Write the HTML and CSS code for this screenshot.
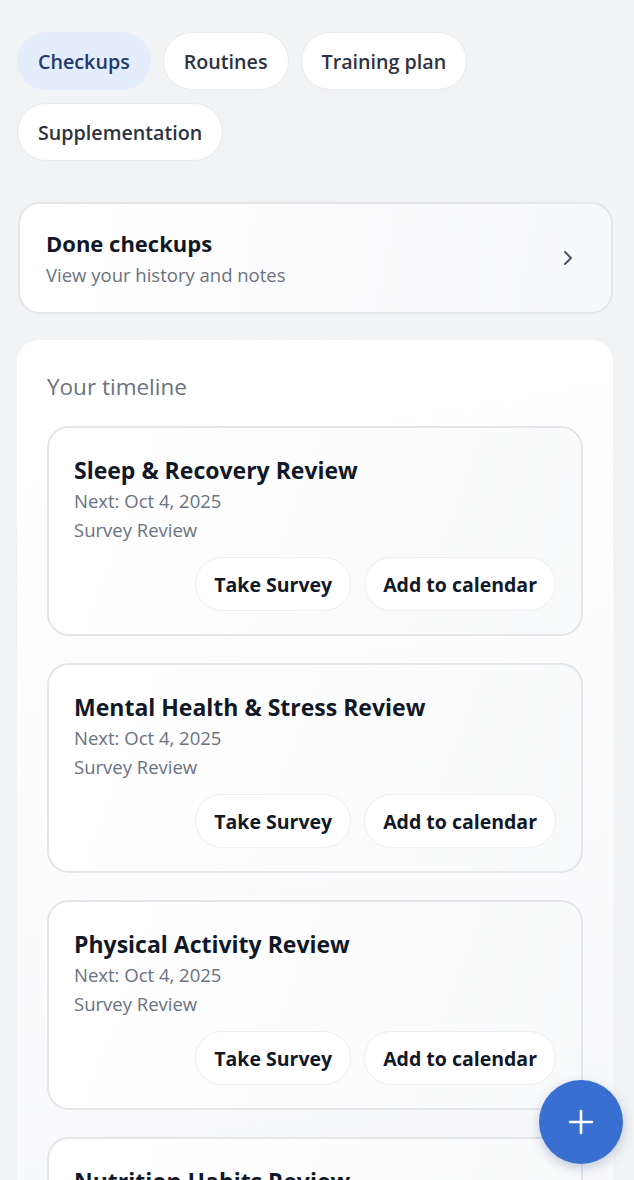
FILE: index.html
```html
<!DOCTYPE html>
<html lang="en">
<head>
    <meta charset="utf-8" />
    <link rel="stylesheet" href="styles.css">
</head>
<body>
    <div class="page">
        <div class="tabs">
            <a class="tab active" href="#">Checkups</a>
            <a class="tab" href="#">Routines</a>
            <a class="tab" href="#">Training plan</a>
            <a class="tab" href="#">Supplementation</a>
        </div>

        <a class="done" href="#">
            <div class="done-text">
                <div class="done-title">Done checkups</div>
                <div class="done-sub">View your history and notes</div>
            </div>
            <svg class="chevron" width="14" height="20" viewBox="0 0 14 20">
                <path d="M4 4l6 6-6 6" fill="none" stroke="#4b5563" stroke-width="2" stroke-linecap="round" stroke-linejoin="round"/>
            </svg>
        </a>

        <div class="timeline">
            <div class="timeline-head">Your timeline</div>

            <div class="item">
                <div class="item-title">Sleep &amp; Recovery Review</div>
                <div class="item-meta">Next: Oct 4, 2025</div>
                <div class="item-meta">Survey Review</div>
                <div class="actions">
                    <a class="btn" href="#">Take Survey</a>
                    <a class="btn" href="#">Add to calendar</a>
                </div>
            </div>

            <div class="item">
                <div class="item-title">Mental Health &amp; Stress Review</div>
                <div class="item-meta">Next: Oct 4, 2025</div>
                <div class="item-meta">Survey Review</div>
                <div class="actions">
                    <a class="btn" href="#">Take Survey</a>
                    <a class="btn" href="#">Add to calendar</a>
                </div>
            </div>

            <div class="item">
                <div class="item-title">Physical Activity Review</div>
                <div class="item-meta">Next: Oct 4, 2025</div>
                <div class="item-meta">Survey Review</div>
                <div class="actions">
                    <a class="btn" href="#">Take Survey</a>
                    <a class="btn" href="#">Add to calendar</a>
                </div>
            </div>

            <div class="item">
                <div class="item-title">Nutrition Habits Review</div>
                <div class="item-meta">Next: Oct 4, 2025</div>
                <div class="item-meta">Survey Review</div>
                <div class="actions">
                    <a class="btn" href="#">Take Survey</a>
                    <a class="btn" href="#">Add to calendar</a>
                </div>
            </div>
        </div>
    </div>

    <a class="fab" href="#">
        <svg width="28" height="28" viewBox="0 0 28 28">
            <path d="M14 3v22M3 14h22" stroke="#fff" stroke-width="2.6" stroke-linecap="round"/>
        </svg>
    </a>
</body>
</html>
```

FILE: styles.css
```css
* {
    padding: 0;
    margin: 0;
    box-sizing: border-box;
}

a {
    text-decoration: none;
    color: inherit;
}

html,
body {
    height: 1180px;
    overflow: hidden;
}

body {
    background: #f2f3f5;
    font-family: "Open Sans", "Noto Sans", sans-serif;
    color: #111827;
}

.page {
    padding: 32px 21px 0 17px;
}

/* tabs */

.tabs {
    display: flex;
    flex-wrap: wrap;
    gap: 13px 12px;
}

.tab {
    height: 58px;
    padding: 0 20px;
    display: flex;
    align-items: center;
    border-radius: 29px;
    background: #fff;
    border: 1px solid #e9eaee;
    font-size: 19.7px;
    font-weight: 600;
    color: #2d3340;
}

.tab.active {
    background: #e4edfc;
    border-color: #e4edfc;
    color: #1e3a6e;
}

/* done checkups */

.done {
    margin-top: 41px;
    margin-left: 1px;
    height: 112px;
    padding: 0 26px;
    display: flex;
    align-items: center;
    justify-content: space-between;
    border: 2px solid #e3e5e9;
    border-radius: 22px;
    background: linear-gradient(100deg, #ffffff, #f7f8fa);
}

.done-title {
    font-size: 22px;
    font-weight: 700;
    color: #111827;
    line-height: 30px;
}

.done-sub {
    margin-top: 3px;
    font-size: 18.5px;
    color: #6b7280;
    line-height: 28px;
}

.chevron {
    margin-right: 10px;
}

/* timeline */

.timeline {
    margin-top: 26px;
    padding: 30px 30px 0 30px;
    border-radius: 22px 22px 0 0;
    background: linear-gradient(170deg, #ffffff, #f6f7f9);
}

.timeline-head {
    font-size: 22.5px;
    font-weight: 500;
    color: #6b7280;
    line-height: 34px;
    margin-bottom: 22px;
}

.item {
    padding: 26px 25px 23px 25px;
    margin-bottom: 27px;
    border: 2px solid #e3e5e9;
    border-radius: 22px;
    background: linear-gradient(110deg, #ffffff, #f8f9fa);
}

.item-title {
    font-size: 23px;
    font-weight: 700;
    line-height: 32px;
    color: #111827;
}

.item-meta {
    font-size: 18.5px;
    line-height: 29px;
    color: #6b7280;
}

.actions {
    display: flex;
    justify-content: flex-end;
    gap: 13px;
    margin-top: 13px;
}

.btn {
    height: 54px;
    padding: 0 18px;
    display: flex;
    align-items: center;
    border-radius: 27px;
    border: 1px solid #eceef1;
    background: #fff;
    font-size: 19.5px;
    font-weight: 700;
    color: #111827;
}

/* floating button */

.fab {
    position: fixed;
    left: 539px;
    top: 1080px;
    width: 84px;
    height: 84px;
    border-radius: 50%;
    background: #3a6fd2;
    display: flex;
    align-items: center;
    justify-content: center;
    box-shadow: 0 4px 12px rgba(30, 60, 120, 0.25);
}
```
